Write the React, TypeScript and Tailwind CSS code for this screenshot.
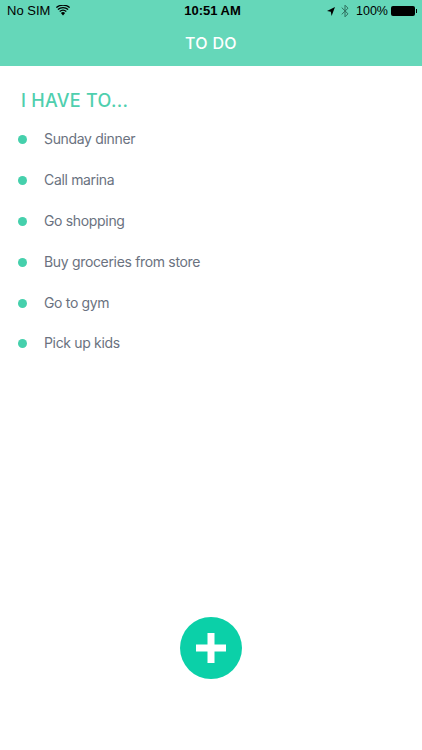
const items = ["Sunday dinner", "Call marina", "Go shopping", "Buy groceries from store", "Go to gym", "Pick up kids"];

export default function App() {
  return (
    <div className="w-[422px] h-[750px] bg-white flex flex-col overflow-hidden font-['Inter',sans-serif]">
      <header className="h-[66px] bg-[#65d7b9] flex flex-col shrink-0">
        <div className="h-[22px] pl-[7px] pr-[5px] flex items-center justify-between text-[13px] text-black relative font-['Liberation_Sans',sans-serif]">
          <div className="flex items-center gap-[6px]">
            <span>No SIM</span>
            <svg width="14" height="11" viewBox="0 0 14 11" className="mb-[2px]">
              <path d="M7 10.5 L4.9 8 A3.2 3.2 0 0 1 9.1 8 Z" fill="#000" />
              <path d="M3.7 6.6 A5 5 0 0 1 10.3 6.6" fill="none" stroke="#000" strokeWidth="1.3" />
              <path d="M1.9 4.5 A7.6 7.6 0 0 1 12.1 4.5" fill="none" stroke="#000" strokeWidth="1.3" />
              <path d="M0.4 2.6 A10 10 0 0 1 13.6 2.6" fill="none" stroke="#000" strokeWidth="1.3" />
            </svg>
          </div>
          <span className="absolute left-[3px] right-0 text-center font-bold">10:51 AM</span>
          <div className="flex items-center relative">
            <svg width="8" height="9" viewBox="0 0 8 9" className="mr-[6px]">
              <path d="M8 0 L0 4 L3.8 4.7 L4.6 9 Z" fill="#000" />
            </svg>
            <svg width="8" height="14" viewBox="0 0 8 14" className="mr-[7px]">
              <path d="M0.7 3.6 L7 9.8 L4 12.8 V1.2 L7 4.2 L0.7 10.4" fill="none" stroke="#2f6f5e" strokeWidth="1" />
            </svg>
            <span className="mr-[3px] text-[12.5px]">100%</span>
            <div className="w-[24px] h-[10px] bg-black rounded-[2px]" />
            <div className="w-[1.5px] h-[4px] bg-black ml-[0.5px]" />
          </div>
        </div>
        <div className="flex-1 flex items-center justify-center text-white text-[16px] font-medium tracking-[0.3px] pb-[3px]">TO DO</div>
      </header>
      <main className="flex-1 flex flex-col relative">
        <h1 className="mt-[23px] ml-[21px] text-[18px] leading-[24px] font-medium tracking-[0.3px] text-[#4fcfae]">I HAVE TO...</h1>
        <ul className="mt-[6.5px] flex flex-col">
          {items.map((t) => (
            <li key={t} className="h-[40.8px] flex items-center pl-[18px] gap-[17px]">
              <span className="w-[9px] h-[9px] rounded-full bg-[#45d0ac]" />
              <span className="text-[14px] tracking-[-0.33px] text-[#6a7280] pb-[2px]">{t}</span>
            </li>
          ))}
        </ul>
        <div className="flex-1" />
        <div className="flex justify-center pb-[71px]">
          <button className="w-[62px] h-[62px] rounded-full bg-[#0bd0a8] flex items-center justify-center">
            <svg width="30" height="30" viewBox="0 0 30 30">
              <path d="M11.5 0 H18.5 V11.5 H30 V18.5 H18.5 V30 H11.5 V18.5 H0 V11.5 H11.5 Z" fill="#fff" />
            </svg>
          </button>
        </div>
      </main>
    </div>
  );
}
